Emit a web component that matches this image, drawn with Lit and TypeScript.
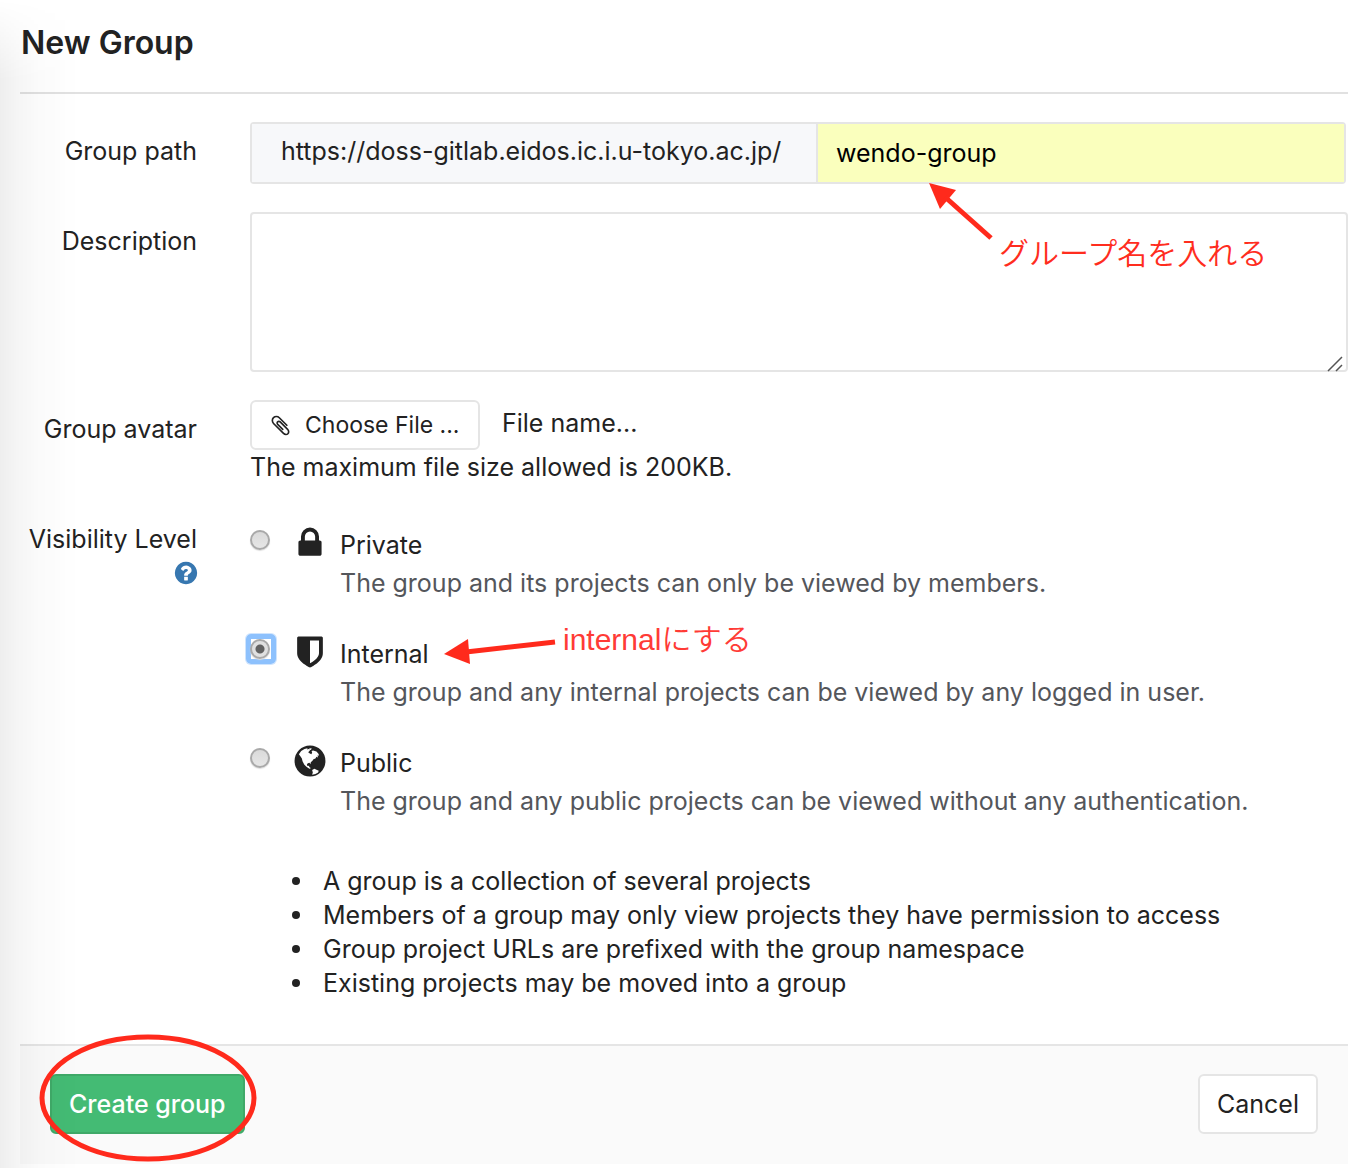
import { LitElement, html, css, svg } from "lit";
import { customElement } from "lit/decorators.js";

const lock = svg`<path d="M640 768h512v-192q0-106-75-181t-181-75-181 75-75 181v192zm832 96v576q0 40-28 68t-68 28h-960q-40 0-68-28t-28-68v-576q0-40 28-68t68-28h32v-192q0-184 132-316t316-132 316 132 132 316v192h32q40 0 68 28t28 68z"/>`;
const shield = svg`<path d="M1344 960v-640h-448v1137q119-63 213-137 235-184 235-360zm192-768v768q0 86-33.5 170.500t-83 150-118 127.500-126.500 103-121 77.500-89.500 49.500-42.500 20q-12 6-26 6t-26-6q-16-7-42.500-20t-89.500-49.500-121-77.500-126.500-103-118-127.500-83-150-33.500-170.500v-768q0-26 19-45t45-19h1152q26 0 45 19t19 45z"/>`;
const globe = svg`<circle cx="896" cy="896" r="768"/><g transform="translate(128 128) scale(16.5)" fill="#fff"><path d="M13 26L20 16L30 10L39 8L38 12L43 10L47 13L44 17L41 20L46 24L51 26L53 20L51 16L56 15L66 18L72 25L74 30L69 30L71 36L66 34L63 39L57 41L54 46L49 50L48 56L45 52L40 53L37 57L39 62L44 61L44 65L48 67L47 71L41 68L35 63L29 57L24 47L22 39L18 33Z"/><path d="M42 12l4-4 6 1-3 4z"/><path d="M53 74L60 70L66 73L73 76L71 81L63 86L53 88L55 81Z"/></g>`;
const help = svg`<path d="M1024 1376v-192q0-14-9-23t-23-9h-192q-14 0-23 9t-9 23v192q0 14 9 23t23 9h192q14 0 23-9t9-23zm256-672q0-88-55.500-163t-138.500-116-170-41q-243 0-371 213-15 24 8 42l132 100q7 6 19 6 16 0 25-12 53-68 86-92 34-24 86-24 48 0 85.500 26t37.500 59q0 38-20 61t-68 45q-63 28-115.500 86.500t-52.500 125.500v36q0 14 9 23t23 9h192q14 0 23-9t9-23q0-19 21.500-49.500t54.500-49.500q32-18 49-28.500t46-35 44.500-48 28-60.500 12.500-81zm384 192q0 209-103 385.500t-279.500 279.500-385.500 103-385.500-103-279.500-279.500-103-385.500 103-385.500 279.500-279.500 385.500-103 385.500 103 279.500 279.500 103 385.500z"/>`;
const clip = svg`<path d="M1596 1385q0 117-79 196t-196 79q-135 0-235-100l-777-776q-113-115-113-271 0-159 110-270t269-111q158 0 273 113l605 606q10 10 10 22 0 16-30.500 46.500t-46.500 30.500q-13 0-23-10l-606-607q-79-77-181-77-106 0-179 75t-73 181q0 105 76 181l776 777q63 63 145 63 64 0 106-42t42-106q0-82-63-145l-581-581q-26-24-60-24-29 0-48 19t-19 48q0 32 25 59l410 410q10 10 10 22 0 16-31 47t-47 31q-12 0-22-10l-410-410q-63-61-63-149 0-82 57-139t139-57q88 0 149 63l581 581q100 98 100 235z"/>`;

const icon = (name: string, shape: unknown) =>
  html`<svg class="icon ${name}" viewBox="0 0 1792 1792" aria-hidden="true">${shape}</svg>`;

const LEVELS = [
  { id: "private", title: "Private", shape: lock, text: "The group and its projects can only be viewed by members." },
  { id: "internal", title: "Internal", shape: shield, text: "The group and any internal projects can be viewed by any logged in user." },
  { id: "public", title: "Public", shape: globe, text: "The group and any public projects can be viewed without any authentication." },
];

const NOTES = [
  "A group is a collection of several projects",
  "Members of a group may only view projects they have permission to access",
  "Group project URLs are prefixed with the group namespace",
  "Existing projects may be moved into a group",
];

@customElement("app-root")
export class AppRoot extends LitElement {
  static styles = css`
    :host {
      display: block;
      position: relative;
      min-height: 100vh;
      box-sizing: border-box;
      padding: 0 18px 4px 20px;
      overflow: hidden;
      background: #fff;
      color: #222;
      font: 25px/34px Inter, "Noto Sans CJK JP", sans-serif;
    }
    * { box-sizing: border-box; }
    .shade {
      position: absolute;
      inset: 0 auto 0 0;
      width: 80px;
      background: linear-gradient(to right, rgba(0,0,0,.068), rgba(0,0,0,.04) 22%, rgba(0,0,0,.016) 50%, transparent);
      -webkit-mask-image: linear-gradient(transparent, #000 80px);
      mask-image: linear-gradient(transparent, #000 80px);
      pointer-events: none;
    }
    .title {
      margin: 0;
      padding: 22px 0 28px 1px;
      border-bottom: 2px solid #e1e1e1;
      font-size: 32px;
      line-height: 42px;
      font-weight: 600;
    }
    .row {
      display: grid;
      grid-template-columns: 177px minmax(0, 1fr);
      column-gap: 53px;
      margin-top: 28px;
    }
    .row.visibility { margin-top: 38px; }
    .label { text-align: right; padding-top: 12px; }
    .visibility .label { padding-top: 0; }
    .path { display: flex; height: 62px; margin-right: 2px; border: 2px solid #e5e5e5; border-radius: 4px; }
    .prefix { flex: none; width: 566px; padding: 10px 29px; background: #f7f8fa; border-right: 2px solid #e5e5e5; }
    .name {
      flex: 1; min-width: 0; padding: 0 18px; border: 0; outline: 0;
      background: #faffbd; color: #000; font: inherit;
    }
    .area { position: relative; }
    .desc {
      display: block; width: 100%; height: 160px; padding: 12px 18px; resize: none;
      border: 2px solid #e5e5e5; border-radius: 4px; background: #fff; font: inherit; outline: 0;
    }
    .grip { position: absolute; right: 5px; bottom: 0; width: 16px; height: 16px; stroke: #555; stroke-width: 1.5; }
    .file { display: flex; align-items: flex-start; gap: 22px; line-height: 46px; }
    .btn {
      display: block; border: 2px solid #e5e5e5; border-radius: 6px; background: #fff;
      color: #222; font: inherit; padding: 0 17px;
    }
    .choose { display: flex; align-items: center; height: 50px; gap: 13px; width: 230px; font-size: 23px; white-space: nowrap; }
    .icon { flex: none; fill: #222; display: block; }
    .clip { width: 23px; height: 23px; }
    .help { fill: #3777b0; width: 26px; height: 26px; margin: 4px -2px 0 auto; }
    .hint { margin: 0; }
    .levels { border: 0; margin: 0; padding: 0; min-width: 0; }
    .level {
      display: grid; grid-template-columns: 20px 40px minmax(0, 1fr); column-gap: 20px;
      padding-bottom: 29px;
    }
    .pick { position: relative; height: 20px; margin-top: 8px; }
    .pick.on::before {
      content: ""; position: absolute; inset: -5px -6px -5px -4px; border-radius: 5px;
      border: 5px solid #8dc1fd; box-shadow: 0 0 0 1px #cfe4fd;
    }
    .radio {
      appearance: none; display: block; position: relative; margin: 0; width: 20px; height: 20px; border-radius: 50%;
      border: 2px solid #a9a9a9; background: linear-gradient(#dadada, #e6e6e6); box-shadow: 0 1px 1px #ddd;
    }
    .radio:checked { background: radial-gradient(circle, #626262 4px, #e0e0e0 5px); }
    .mark { padding: 3px 0 0 2px; }
    .mark .icon { width: 36px; height: 36px; }
    .words { margin-left: -10px; padding-top: 4px; }
    .text { display: block; color: #54565b; line-height: 38px; }
    .head { color: #222; }
    .notes { margin: 15px 0 0; padding: 0 0 0 42px; list-style: none; }
    .notes li { display: flex; align-items: center; gap: 23px; }
    .notes li::before { content: ""; flex: none; width: 8px; height: 8px; border-radius: 50%; background: #222; }
    .foot {
      display: flex; justify-content: space-between; margin-top: 44px; padding: 28px 30px 30px;
      border-top: 2px solid #e5e5e5; background: #fafafa;
    }
    .foot .btn { height: 60px; }
    .foot .create { background: #44bb74; border-color: #3fa968; color: #fff; font-weight: 500; }
    .note {
      position: absolute; color: #ff2d1e; white-space: nowrap; pointer-events: none;
      font: 350 30px/40px "Liberation Sans", "Noto Sans CJK JP", sans-serif;
    }
    .note.path-note { left: 999px; top: 234px; }
    .note.level-note { left: 563px; top: 620px; color: #ff3b36; }
    .draw { position: absolute; left: 0; top: 0; overflow: visible; pointer-events: none; fill: #ff2a1c; stroke: #ff2a1c; }
  `;

  render() {
    return html`
      <h1 class="title">New Group</h1>
      <form @submit=${(e: Event) => e.preventDefault()}>
        <div class="row">
          <label class="label" for="path">Group path</label>
          <div class="path">
            <span class="prefix">https://doss-gitlab.eidos.ic.i.u-tokyo.ac.jp/</span>
            <input class="name" id="path" type="text" value="wendo-group" />
          </div>
        </div>
        <div class="row">
          <label class="label" for="desc">Description</label>
          <div class="area">
            <textarea class="desc" id="desc"></textarea>
            <svg class="grip" viewBox="0 0 16 16" aria-hidden="true"><path d="M1 15L15 1M9 15L15 9" /></svg>
          </div>
        </div>
        <div class="row">
          <label class="label" for="choose">Group avatar</label>
          <div>
            <div class="file">
              <button class="btn choose" id="choose" type="button">${icon("clip", clip)}Choose File ...</button>
              <span>File name...</span>
            </div>
            <p class="hint">The maximum file size allowed is 200KB.</p>
          </div>
        </div>
        <div class="row visibility">
          <div class="label"><span id="visibility">Visibility Level</span>${icon("help", help)}</div>
          <fieldset class="levels" aria-labelledby="visibility">
            ${LEVELS.map((l) => html`<div class="level">
              <span class="pick ${l.id === "internal" ? "on" : ""}">
                <input class="radio" type="radio" name="level" id=${l.id} ?checked=${l.id === "internal"} />
              </span>
              <span class="mark">${icon(l.id, l.shape)}</span>
              <div class="words">
                <label class="text head" for=${l.id}>${l.title}</label>
                <span class="text">${l.text}</span>
              </div>
            </div>`)}
            <ul class="notes">${NOTES.map((n) => html`<li>${n}</li>`)}</ul>
          </fieldset>
        </div>
        <div class="foot">
          <button class="btn create" type="submit">Create group</button>
          <button class="btn" type="button">Cancel</button>
        </div>
      </form>
      <div class="shade"></div>
      <svg class="draw" width="1" height="1" aria-hidden="true">
        <path stroke="none" d="M929 183L956 190L940 209Z" />
        <path stroke-width="5" d="M945 197L991 238" />
        <path stroke="none" d="M444 654L468 639L470 664Z" />
        <path stroke-width="5" d="M466 652L555 642" />
        <ellipse fill="none" stroke-width="5" cx="148" cy="1098" rx="106" ry="61" />
      </svg>
      <span class="note path-note">グループ名を入れる</span>
      <span class="note level-note">internalにする</span>
    `;
  }
}
